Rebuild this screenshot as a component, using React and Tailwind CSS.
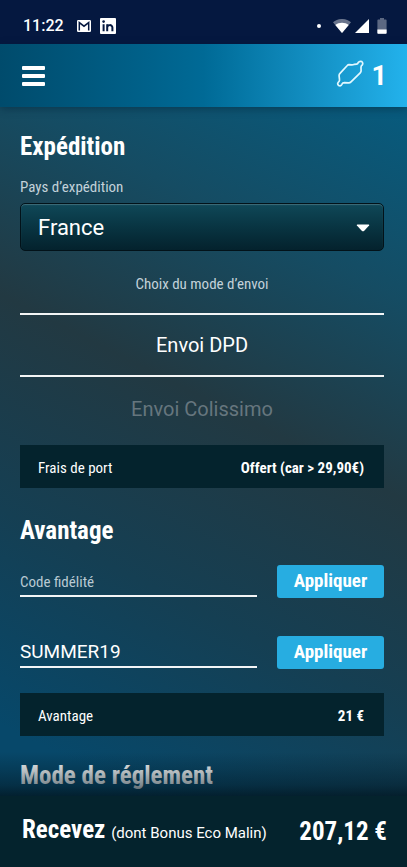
import { useState } from "react";

const COUNTRIES = ["France", "Belgique", "Suisse"];
const SHIPPING_MODES = [
  { id: "dpd", label: "Envoi DPD" },
  { id: "colissimo", label: "Envoi Colissimo" },
];

function StatusBar() {
  return (
    <div className="flex h-11 items-end justify-between bg-[#051840] pr-5 pb-2.5 pl-[23px] text-white">
      <div className="flex items-center">
        <span className="font-['Roboto'] text-base leading-4 font-medium">11:22</span>
        <svg viewBox="0 0 14 12" className="ml-3 h-3 w-4" aria-hidden="true">
          <rect width="14" height="12" rx="1.2" fill="#fff" />
          <path d="M2.3 10.6V2.6L7 6.2l4.7-3.6v8" fill="none" stroke="#051840" strokeWidth="1.5" />
        </svg>
        <svg viewBox="0 0 16 16" className="ml-2 h-4 w-4" aria-hidden="true">
          <rect width="16" height="16" rx="1" fill="#fff" />
          <g fill="none" stroke="#051840" strokeWidth="2">
            <path d="M3.6 6.2v7M7.2 6.2v7M7.2 9.6c0-3.2 5.2-3.4 5.2 0v3.6" />
          </g>
          <circle cx="3.6" cy="3.6" r="1.3" fill="#051840" />
        </svg>
      </div>
      <div className="flex items-center">
        <span className="mr-3 h-1 w-1 rounded-full bg-white" />
        <svg viewBox="0 0 18 14" className="mr-1 h-3.5 w-[18px]" aria-hidden="true">
          <path d="M0 3.2C5-1.1 13-1.1 18 3.2L9 14z" fill="#fff" fillOpacity="0.4" />
          <path d="M2.3 5.9C6 3 12 3 15.7 5.9L9 14z" fill="#fff" />
        </svg>
        <svg viewBox="0 0 14 14" className="h-3.5 w-3.5" aria-hidden="true">
          <path d="M14 0v14H0z" fill="#fff" />
        </svg>
        <svg viewBox="0 0 10 16" className="ml-2 h-4 w-2.5" aria-hidden="true">
          <path d="M3 0h4v1.6h1.8q.8 0 .8.8V15q0 .8-.8.8H1.2q-.8 0-.8-.8V2.4q0-.8.8-.8H3z" fill="#fff" fillOpacity="0.35" />
          <path d="M.4 11.5h9.2V15q0 .8-.8.8H1.2q-.8 0-.8-.8z" fill="#fff" />
        </svg>
      </div>
    </div>
  );
}

function Header({ count }) {
  return (
    <header className="relative flex h-[63px] items-center justify-between bg-linear-to-r from-[#004b6c] via-[#006a96] to-[#23b2ec] px-5 text-white shadow-[0_2px_8px_rgba(0,30,50,0.45)]">
      <button type="button" aria-label="Menu" className="flex w-[27px] flex-col gap-1 px-0.5">
        <span className="h-1 rounded-[1px] bg-white" />
        <span className="h-1 rounded-[1px] bg-white" />
        <span className="h-1 rounded-[1px] bg-white" />
      </button>
      <a href="#panier" aria-label="Panier" className="flex items-center gap-2">
        <svg
          viewBox="0 0 28 28"
          className="mb-1 h-7 w-7"
          fill="none"
          stroke="#e2f8ff"
          strokeWidth="1.7"
          strokeLinejoin="round"
          strokeLinecap="round"
          aria-hidden="true"
        >
          <path d="M13 4.6 15.6 4.9Q17 5 18.4 4.3L20.6 4.1Q21.7 4 22.2 2.6Q23.6.6 25.8 1.6Q27.3 2.9 26.4 4.7Q24.9 5.8 25 7.4L25.1 10.9Q25 12 24.2 12.8L15 21.9Q14 23 12.5 22.9L8.4 22.6Q6.6 22.6 5.8 24.3Q4.6 26.6 2.7 25.5Q1 24.2 2.2 22.4Q3.8 21 3.5 19.4L3.1 15.8Q3 14.4 4 13.4L11.3 5.5Q12 4.6 13 4.6Z" />
        </svg>
        <span className="font-['Roboto'] text-[27px] leading-8 font-bold">{count}</span>
      </a>
    </header>
  );
}

function PromoField({ label, value, onChange }) {
  return (
    <form className="flex items-end justify-between gap-5" onSubmit={(e) => e.preventDefault()}>
      <div className="min-w-0 flex-1 pb-px">
        <input
          aria-label={label}
          value={value}
          placeholder={label}
          onChange={(e) => onChange(e.target.value)}
          className="block h-8 w-full rounded-none border-b-2 border-white/95 bg-transparent font-['Roboto'] text-[19px] text-white outline-none placeholder:font-['Roboto_Condensed'] placeholder:text-[15px] placeholder:text-[#b9cad3]"
        />
      </div>
      <button type="submit" className="h-[33px] w-[107px] rounded-[3px] bg-[#27ade1] text-[19px] font-bold text-white">
        Appliquer
      </button>
    </form>
  );
}

function SummaryRow({ label, value }) {
  return (
    <div className="flex h-[43px] items-center justify-between bg-[#04232d] pt-1 pr-5 pl-[18px] text-[15px] text-white">
      <span>{label}</span>
      <span className="font-bold">{value}</span>
    </div>
  );
}

export default function App() {
  const [country, setCountry] = useState("France");
  const [mode, setMode] = useState("dpd");
  const [loyalty, setLoyalty] = useState("");
  const [promo, setPromo] = useState("SUMMER19");

  return (
    <div className="flex min-h-screen flex-col bg-[#04232d] font-['Roboto_Condensed','Roboto',sans-serif]">
      <StatusBar />
      <Header count={1} />

      <main className="flex-1 bg-[linear-gradient(207deg,#075b7e_0%,#154c63_22%,#223942_44%,#153f53_68%,#07486a_92%)] pt-6 pr-[23px] pl-5 text-white">
        <section>
          <h2 className="text-[25px] leading-8 font-bold">Expédition</h2>
          <label htmlFor="country" className="mt-3.5 block text-[15px] leading-5 text-[#c3d2da]">
            Pays d’expédition
          </label>
          <div className="relative mt-1.5">
            <select
              id="country"
              value={country}
              onChange={(e) => setCountry(e.target.value)}
              className="block h-12 w-full appearance-none rounded-[5px] border border-[#021219] bg-linear-to-b from-[#0f4858] to-[#04222d] px-[17px] font-['Roboto'] text-[22px] text-white shadow-[inset_0_1px_1px_rgba(255,255,255,0.2)] outline-none"
            >
              {COUNTRIES.map((c) => (
                <option key={c}>{c}</option>
              ))}
            </select>
            <svg viewBox="0 0 14 8" className="pointer-events-none absolute top-[21px] right-3.5 h-2 w-3.5" aria-hidden="true">
              <path d="M1.3.5h11.4q1 .3.4 1L8 6.9Q7 7.8 6 6.9L.9 1.5Q.3.8 1.3.5z" fill="#fff" />
            </svg>
          </div>

          <p className="mt-[23px] text-center text-[15px] leading-5 text-[#c3d2da]">Choix du mode d’envoi</p>
          <div className="mt-[19px]">
            {SHIPPING_MODES.map((m) => (
              <button
                key={m.id}
                type="button"
                aria-pressed={mode === m.id}
                onClick={() => setMode(m.id)}
                className={`block h-16 w-full font-['Roboto'] text-xl ${
                  mode === m.id ? "border-y-2 border-white/95 text-white" : "text-[#66767e]"
                }`}
              >
                {m.label}
              </button>
            ))}
          </div>
          <div className="mt-1">
            <SummaryRow label="Frais de port" value="Offert (car > 29,90€)" />
          </div>
        </section>

        <section className="mt-[27px]">
          <h2 className="text-[25px] leading-8 font-bold">Avantage</h2>
          <div className="mt-[18px] space-y-[38px]">
            <PromoField label="Code fidélité" value={loyalty} onChange={setLoyalty} />
            <PromoField label="Code promo" value={promo} onChange={setPromo} />
          </div>
          <div className="mt-6">
            <SummaryRow label="Avantage" value="21 €" />
          </div>
        </section>

        <section className="mt-6">
          <h2 className="text-[25px] leading-8 font-bold">Mode de réglement</h2>
        </section>
      </main>

      <footer className="relative flex h-[71px] items-center justify-between bg-[#04232d] pr-5 pl-[22px] text-white before:pointer-events-none before:absolute before:inset-x-0 before:bottom-full before:h-11 before:bg-[linear-gradient(to_top,#021722d0_0%,#02172280_25%,#02172240_60%,#02172200_100%)]">
        <p className="text-[25px] leading-8 font-bold">
          Recevez <span className="font-['Roboto'] text-[15px] font-normal">(dont Bonus Eco Malin)</span>
        </p>
        <p className="text-[25px] leading-8 font-bold">207,12 €</p>
      </footer>
    </div>
  );
}
